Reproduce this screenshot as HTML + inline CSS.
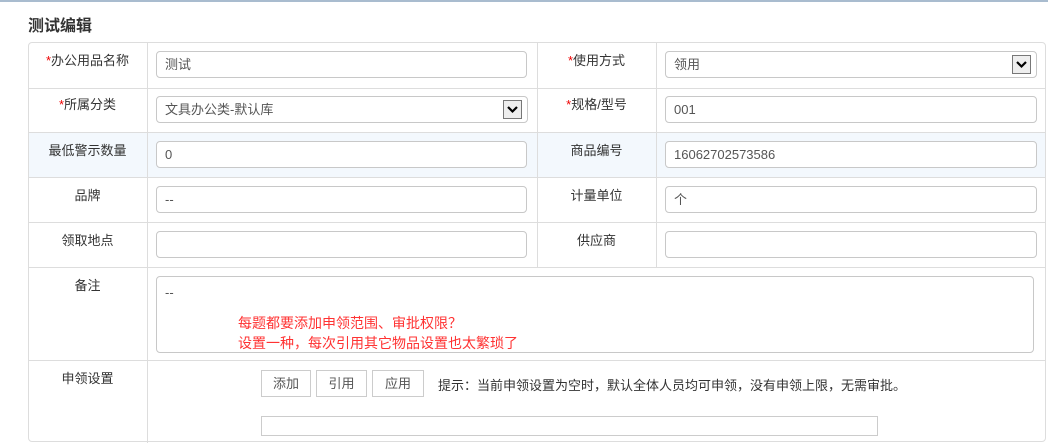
<!DOCTYPE html>
<html><head><meta charset="utf-8"><style>
*{box-sizing:border-box;margin:0;padding:0}
body{width:1048px;height:429px;overflow:hidden;background:#fff;font-family:"Liberation Sans","Noto Sans CJK SC",sans-serif;font-size:13px;color:#333;position:relative}
.top{position:absolute;left:0;top:0;width:1048px;height:2px;background:#a9bccf}
h1{position:absolute;left:28px;top:12px;font-size:16px;font-weight:bold;color:#333}
.tbl{position:absolute;left:28px;top:42px;width:1018px;height:400px;border:1px solid #ddd;border-radius:4px}
.hl{position:absolute;left:0;width:1016px;height:1px;background:#ddd}
.vl{position:absolute;width:1px;background:#ddd}
.lab{position:absolute;text-align:center;font-size:13px;color:#333;line-height:18px}
.r{color:#e00}
.inp{position:absolute;height:27px;border:1px solid #c8c8c8;border-radius:4px;background:#fff;padding:0 8px;line-height:25px;font-size:13px;color:#555}
.arr{position:absolute;right:5px;top:3px;width:19px;height:19px;border:1px solid #777;background:#eee}
.arr svg{display:block;margin:1px}
.btn{position:absolute;top:370px;height:27px;border:1px solid #ccc;background:#fff;font-size:13px;color:#555;text-align:center;line-height:25px}
</style></head><body>
<div class="top"></div>
<h1>测试编辑</h1>
<div style="position:absolute;left:28px;top:132px;width:1017px;height:45px;background:#f3f8fd"></div>
<div class="tbl">
<div class="hl" style="top:45px"></div><div class="hl" style="top:89px"></div><div class="hl" style="top:134px"></div><div class="hl" style="top:179px"></div><div class="hl" style="top:224px"></div><div class="hl" style="top:317px"></div>
<div class="vl" style="left:118px;top:0;height:400px"></div>
<div class="vl" style="left:508px;top:0;height:224px"></div>
<div class="vl" style="left:627px;top:0;height:224px"></div>
</div>
<div class="lab" style="left:28px;width:119px;top:52px"><span class="r">*</span>办公用品名称</div>
<div class="lab" style="left:537px;width:119px;top:52px"><span class="r">*</span>使用方式</div>
<div class="lab" style="left:28px;width:119px;top:96px"><span class="r">*</span>所属分类</div>
<div class="lab" style="left:537px;width:119px;top:96px"><span class="r">*</span>规格/型号</div>
<div class="lab" style="left:28px;width:119px;top:142px">最低警示数量</div>
<div class="lab" style="left:537px;width:119px;top:142px">商品编号</div>
<div class="lab" style="left:28px;width:119px;top:187px">品牌</div>
<div class="lab" style="left:537px;width:119px;top:187px">计量单位</div>
<div class="lab" style="left:28px;width:119px;top:232px">领取地点</div>
<div class="lab" style="left:537px;width:119px;top:232px">供应商</div>
<div class="lab" style="left:28px;width:119px;top:277px">备注</div>
<div class="lab" style="left:28px;width:119px;top:370px">申领设置</div>

<div class="inp" style="left:156px;top:51px;width:371px">测试</div>
<div class="inp" style="left:665px;top:51px;width:372px">领用<div class="arr"><svg width="15" height="15"><path d="M3 5l4.5 4.5 4.5-4.5" stroke="#000" stroke-width="2.2" fill="none"/></svg></div></div>
<div class="inp" style="left:156px;top:96px;width:372px">文具办公类-默认库<div class="arr"><svg width="15" height="15"><path d="M3 5l4.5 4.5 4.5-4.5" stroke="#000" stroke-width="2.2" fill="none"/></svg></div></div>
<div class="inp" style="left:665px;top:96px;width:372px">001</div>
<div class="inp" style="left:156px;top:141px;width:371px">0</div>
<div class="inp" style="left:665px;top:141px;width:372px">16062702573586</div>
<div class="inp" style="left:156px;top:186px;width:371px">--</div>
<div class="inp" style="left:665px;top:186px;width:372px">个</div>
<div class="inp" style="left:156px;top:231px;width:371px"></div>
<div class="inp" style="left:665px;top:231px;width:372px"></div>
<div class="inp" style="left:156px;top:276px;width:878px;height:77px;padding-top:3px">--</div>
<div style="position:absolute;left:238px;top:313px;color:#f33;font-size:14px;line-height:20px">每题都要添加申领范围、审批权限？<br>设置一种，每次引用其它物品设置也太繁琐了</div>
<div class="btn" style="left:261px;width:50px">添加</div>
<div class="btn" style="left:316px;width:51px">引用</div>
<div class="btn" style="left:372px;width:52px">应用</div>
<div style="position:absolute;left:438px;top:375px;font-size:13px;color:#333">提示：当前申领设置为空时，默认全体人员均可申领，没有申领上限，无需审批。</div>
<div style="position:absolute;left:261px;top:416px;width:617px;height:20px;border:1px solid #ccc"></div>
</body></html>
